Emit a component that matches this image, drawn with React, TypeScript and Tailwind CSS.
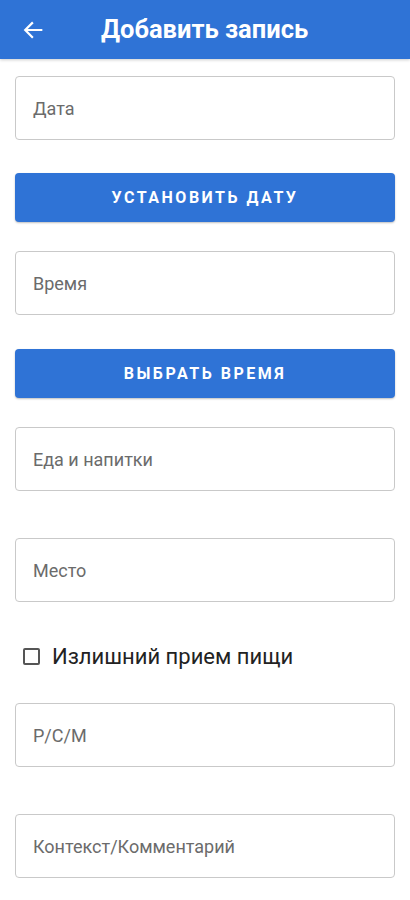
import React from "react";

const Field = ({ label, className = "" }: { label: string; className?: string }) => (
  <div
    className={`mx-[15px] h-[64px] flex items-center px-[17px] rounded-[4px] border border-[#c9c9c9] bg-white text-[18px] text-[#6b6b6b] ${className}`}
  >
    {label}
  </div>
);

const Button = ({ label, className = "" }: { label: string; className?: string }) => (
  <button
    className={`mx-[15px] h-[49px] flex items-center justify-center rounded-[4px] bg-[#2f73d6] text-white text-[16px] font-bold tracking-[2.5px] shadow-[0_1px_2px_rgba(0,0,0,0.25)] ${className}`}
  >
    {label}
  </button>
);

export default function App() {
  return (
    <div className="w-[410px] h-[900px] bg-white overflow-hidden font-['Roboto',sans-serif] flex flex-col">
      <div className="h-[59px] shrink-0 bg-[#2f73d6] flex items-center shadow-[0_1px_3px_rgba(0,0,0,0.2)]">
        <div className="w-[66px] flex justify-center">
          <svg width="22" height="22" viewBox="0 0 24 24" fill="none" stroke="white" strokeWidth="2.4" strokeLinecap="square">
            <path d="M21 12H4M11 4.5L3.5 12L11 19.5" />
          </svg>
        </div>
        <div className="ml-[35px] text-white text-[25.5px] font-bold">Добавить запись</div>
      </div>

      <Field label="Дата" className="mt-[17px]" />
      <Button label="УСТАНОВИТЬ ДАТУ" className="mt-[33px]" />
      <Field label="Время" className="mt-[29px]" />
      <Button label="ВЫБРАТЬ ВРЕМЯ" className="mt-[34px]" />
      <Field label="Еда и напитки" className="mt-[29px]" />
      <Field label="Место" className="mt-[47px]" />

      <label className="mt-[40px] ml-[23px] h-[28px] flex items-center gap-[12px] text-[22px] text-[#222]">
        <span className="w-[17px] h-[17px] border-2 border-[#555] rounded-[2px]" />
        Излишний прием пищи
      </label>

      <Field label="Р/С/М" className="mt-[33px]" />
      <Field label="Контекст/Комментарий" className="mt-[47px]" />
    </div>
  );
}
